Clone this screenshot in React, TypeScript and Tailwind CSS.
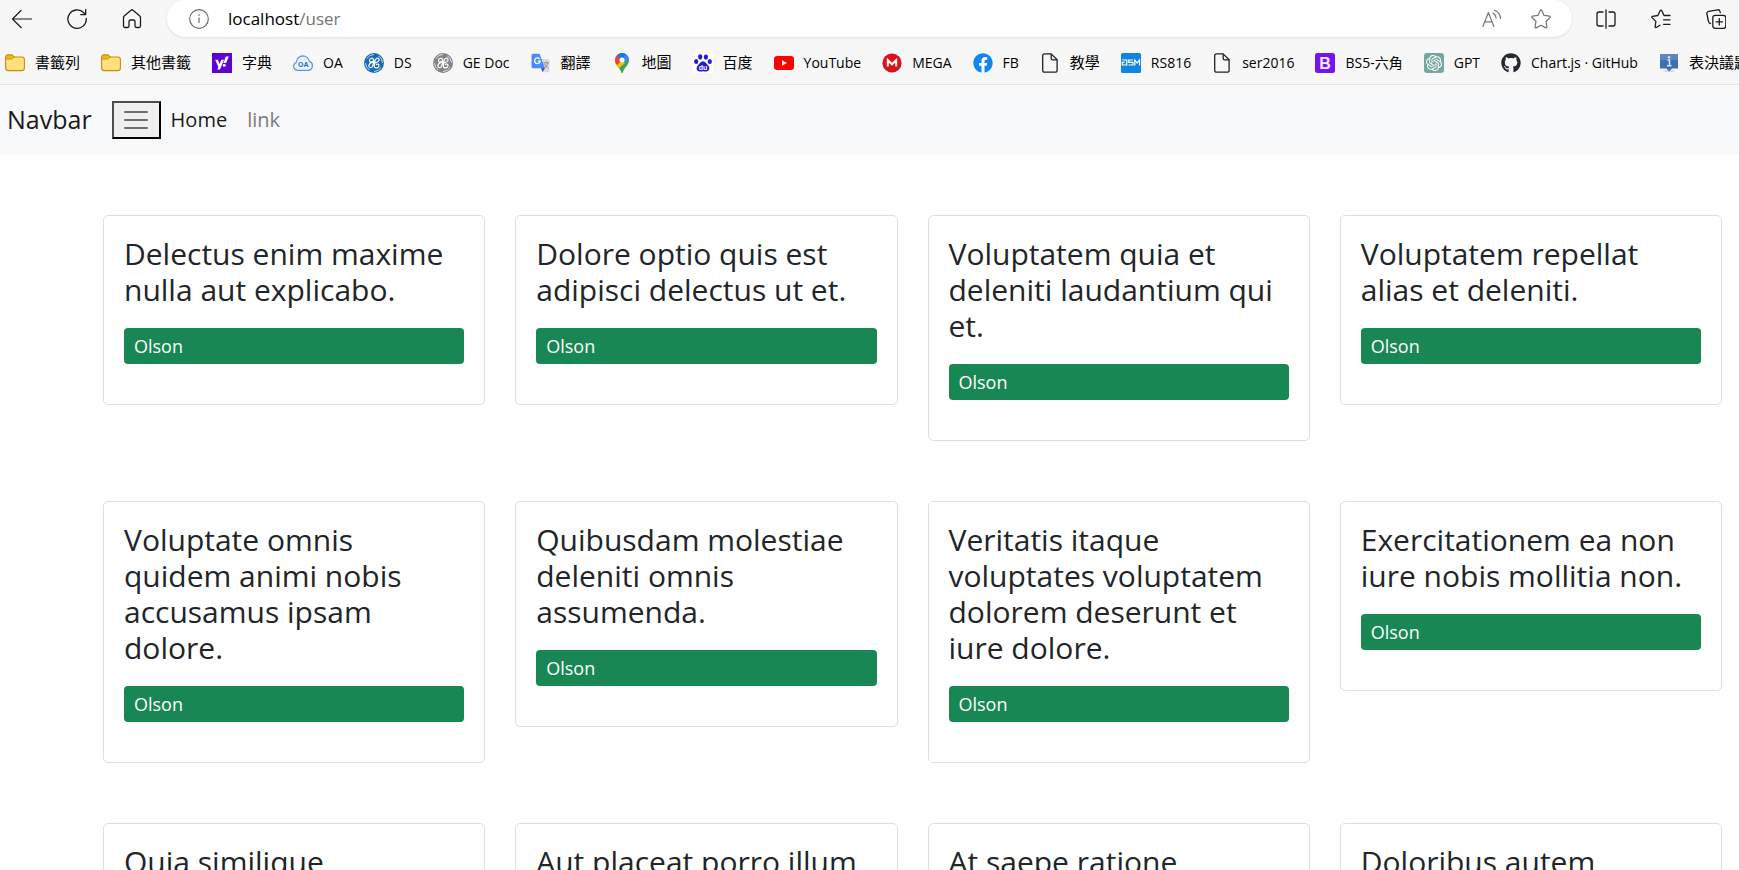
import type { ReactNode } from 'react';
import { FaGithub, FaFacebook } from 'react-icons/fa';
import { SiOpenai } from 'react-icons/si';

const FolderIcon = () => (
  <svg viewBox="0 0 20 20" className="size-5">
    <path d="M.6 4.500A2.500 2.500 0 0 1 3 2H7l2.300 2H17a2.400 2.400 0 0 1 2.400 2.400V15a2.600 2.600 0 0 1-2.600 2.600H3.200A2.600 2.600 0 0 1 .6 15z" fill="#ffdf7e" stroke="#c08e10" strokeWidth="1.100" />
    <path d="M.7 5.500V4.200A2.200 2.200 0 0 1 3 2h4l2.200 2-1.600 1.500A2 2 0 0 1 6.200 6H1.200z" fill="#f4b90c" stroke="#c08e10" strokeWidth=".9" />
  </svg>
);

const YahooIcon = () => (
  <svg viewBox="0 0 20 20" className="size-5">
    <rect width="20" height="20" fill="#5f01d1" />
    <path d="M3.200 6.800h2.700l1.700 4.100 1.700-4.100H12L8 16.600H5.300l1.100-2.500zM13.800 3.400h3L14.200 10h-2.800z" fill="#fff" />
    <circle cx="12.200" cy="12.300" r="1.500" fill="#fff" />
  </svg>
);

const OaIcon = () => (
  <svg viewBox="0 0 20 20" className="size-5">
    <path d="M4.500 17.300A4.200 4.200 0 0 1 3.400 9.200 6.600 6.600 0 0 1 9.800 2.800a6.600 6.600 0 0 1 6.500 5.600 4.600 4.600 0 0 1-.8 8.900z" fill="#edf4ff" stroke="#5a92ec" strokeWidth="1.200" />
    <text x="10.300" y="14.300" textAnchor="middle" fontFamily="Liberation Sans, sans-serif" fontWeight="700" fontSize="7" fill="#1f63dc">OA</text>
  </svg>
);

const GeIcon = ({ color }: { color: string }) => (
  <svg viewBox="0 0 20 20" className="size-5" fill="none" stroke="#fff">
    <circle cx="10" cy="10" r="10" fill={color} stroke="none" />
    <g strokeWidth=".9" strokeLinecap="round" opacity=".85">
      <path d="M3 5.200Q5.300 1.700 9.500 1.500M14.800 3Q18.300 5.300 18.500 9.500M17 14.800Q14.700 18.300 10.500 18.500M5.200 17Q1.700 14.700 1.500 10.500" />
    </g>
    <path strokeWidth="1.200" strokeLinecap="round" d="M9.400 6.600C8.800 4.600 6 4.800 5.500 7c-.4 2 1.600 2.500 2.800 1.400M9.800 8.300C8 9.300 5.200 10 4.900 12.400c-.3 2.300 2 3 3.300 1.400C9.300 12.400 9.500 10.500 9.800 6.600M10.500 14c1.500 1.800 4.300.8 4.500-1.300.1-1.500-1.500-2.200-2.600-1.200M10.400 13c0-3 .7-7 2.500-7.700 1.700-.6 2.700 1.200 1.900 2.500-.8 1.300-2.500 1.700-4 2.200" />
  </svg>
);

const TranslateIcon = () => (
  <svg viewBox="0 0 20 20" className="size-5">
    <path d="M8 6h9A1.500 1.500 0 0 1 18.500 7.500V18a1.300 1.300 0 0 1-1.300 1.300H12z" fill="#dcdcdc" />
    <path d="M10 15h4.200L11.500 19z" fill="#2f56bd" />
    <path d="M2 .8h6.500L14 15.300H2A1.500 1.500 0 0 1 .5 13.800V2.300A1.500 1.500 0 0 1 2 .8z" fill="#4c8bf5" />
    <path d="M8.600 6A2.800 2.800 0 1 0 9.200 8.200H6.700" fill="none" stroke="#fff" strokeWidth="1.300" />
    <path d="M12.500 9.800H18M15.200 8.500v1.300M17 9.800c-.5 2.500-2 4-3.500 5M13.500 10.800c.7 2 2.200 3.500 4 4.500" fill="none" stroke="#76848f" strokeWidth=".9" />
  </svg>
);

const MapsIcon = () => (
  <svg viewBox="0 0 20 20" className="size-5">
    <defs>
      <clipPath id="pin">
        <path d="M10 0a7 7 0 0 1 7 7c0 3-1.500 4.800-3.200 7-1.400 1.800-2.300 3-2.800 5-.3 1.200-1.700 1.200-2 0-.5-2-1.400-3.200-2.800-5C4.500 11.800 3 10 3 7a7 7 0 0 1 7-7z" />
      </clipPath>
    </defs>
    <g clipPath="url(#pin)">
      <path d="M0 0h20v20H0z" fill="#34a853" />
      <path d="M10 7 3.500 14.500 0 12 5 4l10-2z" fill="#fbbc04" />
      <path d="M10 7 4.700 13 0 10 4.600 2.500z" fill="#fbbc04" />
      <path d="M4.600 2.500 10 7l-5 5L0 9z" fill="#ea4335" />
      <path d="M10 7 4 14l2 2 7-6z" fill="#fbbc04" />
      <path d="M4.600 2.500 10 7l5-5.500L10-1z" fill="#1a73e8" />
      <path d="m10 7 4-6 5 3-5 5z" fill="#4285f4" />
    </g>
    <circle cx="10" cy="7" r="2.500" fill="#fff" />
  </svg>
);

const BaiduIcon = () => (
  <svg viewBox="0 0 20 20" className="size-5">
    <rect width="20" height="20" fill="#fff" />
    <g fill="#2319dc">
      <ellipse cx="7.200" cy="4" rx="2.100" ry="2.700" />
      <ellipse cx="12.900" cy="4.100" rx="2.100" ry="2.700" />
      <ellipse cx="3.200" cy="8.400" rx="2.100" ry="2.500" />
      <ellipse cx="16.800" cy="8.600" rx="2.100" ry="2.500" />
      <path d="M10 8.300c2.200 0 3 2.300 4.800 3.800 2.500 2.200 2 6.500-1.600 6.500-1.200 0-2-.4-3.200-.4s-2 .4-3.200.4c-3.600 0-4.100-4.300-1.600-6.500C7 10.600 7.800 8.300 10 8.300z" />
    </g>
    <text x="10" y="17" textAnchor="middle" fontFamily="Liberation Sans, sans-serif" fontWeight="700" fontSize="7" fill="#fff">du</text>
  </svg>
);

const YouTubeIcon = () => (
  <svg viewBox="0 0 20 20" className="size-5">
    <rect y="3" width="20" height="14" rx="3.200" fill="#f00" />
    <path d="M8 7.200v5.600l5-2.800z" fill="#fff" />
  </svg>
);

const MegaIcon = () => (
  <svg viewBox="0 0 20 20" className="size-5">
    <circle cx="10" cy="10" r="9.600" fill="#dd1219" />
    <path d="M5.800 13.600V7.200L10 11.300l4.200-4.100v6.400" fill="none" stroke="#fff" strokeWidth="2" />
  </svg>
);

const FacebookIcon = () => (
  <span className="block size-5 rounded-full bg-white">
    <FaFacebook className="size-5 text-[#0f86f2]" />
  </span>
);

const PageIcon = () => (
  <svg viewBox="0 0 20 20" className="size-5" fill="none" stroke="#222" strokeWidth="1.300" strokeLinejoin="round">
    <path d="M4.500.9h6.700l5.900 5.900v10.600a1.800 1.800 0 0 1-1.800 1.800H4.500a1.800 1.800 0 0 1-1.800-1.800V2.700A1.800 1.800 0 0 1 4.500.9z" />
    <path d="M11.200.9v4.500a1.400 1.400 0 0 0 1.400 1.400h4.500" />
  </svg>
);

const DsmIcon = () => (
  <svg viewBox="0 0 20 20" className="size-5">
    <rect width="20" height="20" rx="1.500" fill="#0f84e0" />
    <path d="M1.200 7h4.600v5H1.300V9.400h2.200M12 7H7.700v2.400H12V12H7.500M13.800 12.500V7l2.300 3L18.500 7v5.500" fill="none" stroke="#fff" strokeWidth="1.200" />
  </svg>
);

const BootstrapIcon = () => (
  <svg viewBox="0 0 20 20" className="size-5">
    <rect width="20" height="20" rx="2.500" fill="#7414ee" />
    <text x="10" y="15.600" textAnchor="middle" fontFamily="Liberation Sans, sans-serif" fontWeight="700" fontSize="16" fill="#f4e9ff">B</text>
  </svg>
);

const GptIcon = () => (
  <span className="flex size-5 items-center justify-center rounded-[3px] bg-[#75a99c]">
    <SiOpenai className="size-4 text-white" />
  </span>
);

const VoteIcon = () => (
  <svg viewBox="0 0 20 20" className="size-5">
    <ellipse cx="10" cy="18" rx="6" ry="1" fill="#d5d8dc" />
    <path d="M1 1h18v14.500h-6L10 18.500l-2.500-3H1z" fill="#3f6fb5" />
    <path d="M1 1h18v6H1z" fill="#5d86c0" />
    <path d="M8.500 7h2v5.500M8 12.800h4.500" stroke="#dbe8f8" strokeWidth="1.500" fill="none" />
    <circle cx="10" cy="4.200" r="1.200" fill="#dbe8f8" />
  </svg>
);

const bookmarks: { label: string; icon: ReactNode; chinese?: boolean }[] = [
  { label: '書籤列', icon: <FolderIcon />, chinese: true },
  { label: '其他書籤', icon: <FolderIcon />, chinese: true },
  { label: '字典', icon: <YahooIcon />, chinese: true },
  { label: 'OA', icon: <OaIcon /> },
  { label: 'DS', icon: <GeIcon color="#1769bd" /> },
  { label: 'GE Doc', icon: <GeIcon color="#828386" /> },
  { label: '翻譯', icon: <TranslateIcon />, chinese: true },
  { label: '地圖', icon: <MapsIcon />, chinese: true },
  { label: '百度', icon: <BaiduIcon />, chinese: true },
  { label: 'YouTube', icon: <YouTubeIcon /> },
  { label: 'MEGA', icon: <MegaIcon /> },
  { label: 'FB', icon: <FacebookIcon /> },
  { label: '教學', icon: <PageIcon />, chinese: true },
  { label: 'RS816', icon: <DsmIcon /> },
  { label: 'ser2016', icon: <PageIcon /> },
  { label: 'BS5-六角', icon: <BootstrapIcon /> },
  { label: 'GPT', icon: <GptIcon /> },
  { label: 'Chart.js · GitHub', icon: <FaGithub className="size-5 text-[#24292f]" /> },
  { label: '表決議題', icon: <VoteIcon />, chinese: true },
];

const posts = [
  'Delectus enim maxime nulla aut explicabo.',
  'Dolore optio quis est adipisci delectus ut et.',
  'Voluptatem quia et deleniti laudantium qui et.',
  'Voluptatem repellat alias et deleniti.',
  'Voluptate omnis quidem animi nobis accusamus ipsam dolore.',
  'Quibusdam molestiae deleniti omnis assumenda.',
  'Veritatis itaque voluptates voluptatem dolorem deserunt et iure dolore.',
  'Exercitationem ea non iure nobis mollitia non.',
  'Quia similique',
  'Aut placeat porro illum',
  'At saepe ratione',
  'Doloribus autem',
];

const STAR = 'M9.300 1.300a.8.8 0 0 1 1.400 0l2.400 5.100 5.500.8a.8.8 0 0 1 .4 1.300l-4 4 1 5.600a.8.8 0 0 1-1.100.8L10 16.200l-4.900 2.700a.8.8 0 0 1-1.100-.8l1-5.600-4-4a.8.8 0 0 1 .4-1.300l5.500-.8z';

function Toolbar() {
  return (
    <div className="flex h-[37px] items-center">
      <div className="flex w-[167px] shrink-0 items-center gap-[35px] pl-3">
        <button aria-label="Back" className="size-5">
          <svg viewBox="0 0 20 20" fill="none" stroke="#1b1b1b" strokeWidth="1.200" strokeLinecap="round" strokeLinejoin="round">
            <path d="M19.500 10H.7M9 1.500.5 10 9 18.500" />
          </svg>
        </button>
        <button aria-label="Refresh" className="size-5">
          <svg viewBox="0 0 20 20" fill="none" stroke="#1b1b1b" strokeWidth="1.300" strokeLinecap="round" strokeLinejoin="round">
            <path d="M19.300 9.500A9.200 9.200 0 1 1 16.800 3.800L18.500 5.500M18.700.7v4.900h-5" />
          </svg>
        </button>
        <button aria-label="Home page" className="size-5">
          <svg viewBox="0 0 20 20" fill="none" stroke="#1b1b1b" strokeWidth="1.300" strokeLinejoin="round">
            <path d="M1.500 8.500a2 2 0 0 1 .7-1.500L9 1.200a1.500 1.500 0 0 1 2 0L17.800 7a2 2 0 0 1 .7 1.500V17a1.500 1.500 0 0 1-1.500 1.500h-2.500A1.500 1.500 0 0 1 13 17v-4.500a1.500 1.500 0 0 0-1.500-1.500h-3A1.500 1.500 0 0 0 7 12.500V17a1.500 1.500 0 0 1-1.500 1.500H3A1.500 1.500 0 0 1 1.500 17z" />
          </svg>
        </button>
      </div>
      <div className="flex h-full grow items-center rounded-full bg-white pr-[21px] pl-[22px] shadow-[0_1px_3px_#0000001a]">
        <svg viewBox="0 0 20 20" className="size-5" fill="none" stroke="#6b6b6b" strokeWidth="1.200">
          <circle cx="10" cy="10" r="9.300" />
          <path d="M10 8.500v5.500" />
          <circle cx="10" cy="6" r=".5" fill="#6b6b6b" strokeWidth=".6" />
        </svg>
        <div className="ml-[19px] grow text-[17px] text-black">
          localhost<span className="text-[#757575]">/user</span>
        </div>
        <div className="flex gap-[29px]">
          <button aria-label="Read aloud" className="size-5">
            <svg viewBox="0 0 20 20" fill="none" stroke="#757575" strokeWidth="1.200" strokeLinecap="round" strokeLinejoin="round">
              <path d="M.9 17.500 6.400 3.500l5.500 14M2.700 12.800h7.400M11 4c1.700 1 2.900 2.700 3.100 5M12.500 1.200c3.500 1.500 5.800 4.300 6 8.300" />
            </svg>
          </button>
          <button aria-label="Add to favorites" className="size-5">
            <svg viewBox="0 0 20 20" fill="none" stroke="#757575" strokeWidth="1.200" strokeLinejoin="round">
              <path d={STAR} />
            </svg>
          </button>
        </div>
      </div>
      <div className="flex w-[167px] shrink-0 items-center gap-[35px] pl-6">
        <button aria-label="Split screen" className="size-5">
          <svg viewBox="0 0 20 20" fill="none" stroke="#1b1b1b" strokeWidth="1.300" strokeLinecap="round">
            <path d="M10 .8v18.400M7 3H3a2 2 0 0 0-2 2v10a2 2 0 0 0 2 2h4M13 3h4a2 2 0 0 1 2 2v10a2 2 0 0 1-2 2h-4" />
          </svg>
        </button>
        <button aria-label="Favorites" className="size-5">
          <svg viewBox="0 0 20 20" fill="none" stroke="#1b1b1b" strokeWidth="1.300" strokeLinecap="round" strokeLinejoin="round">
            <path d="M9 16.300 5.200 18.500a.8.8 0 0 1-1.100-.8l.8-5.300L1 8.600a.8.8 0 0 1 .4-1.300l5.400-.8 2.500-5a.8.8 0 0 1 1.400 0l2.300 5H19M12.500 10.800H19M12.500 15.300H19" />
          </svg>
        </button>
        <button aria-label="Collections" className="size-5">
          <svg viewBox="0 0 20 20" fill="none" stroke="#1b1b1b" strokeWidth="1.300" strokeLinecap="round" strokeLinejoin="round">
            <rect x="6.800" y="6.300" width="13" height="13" rx="2.500" />
            <path d="M13.300 9.600v6.400M10.100 12.800h6.400M4.500 14.500a2.500 2.500 0 0 1-2-2L.9 5a2.200 2.200 0 0 1 1.800-2.700L11.500.8a2.200 2.200 0 0 1 2.500 1.700l.3 1.200" />
          </svg>
        </button>
      </div>
    </div>
  );
}

export default function App() {
  return (
    <div className="h-screen overflow-hidden bg-white font-['Open_Sans','Noto_Sans_CJK_TC',sans-serif] text-[#212529]">
      <header className="border-b border-[#e5e5e5] bg-[#f7f7f7]">
        <Toolbar />
        <nav aria-label="Bookmarks" className="flex h-[47px] items-center gap-[21px] overflow-hidden pt-1 pl-[5px]">
          {bookmarks.map(({ label, icon, chinese }) => (
            <a key={label} href="#" className="flex shrink-0 items-center gap-[10px] whitespace-nowrap text-black">
              {icon}
              <span className={chinese ? 'text-[15px]' : 'text-sm'}>{label}</span>
            </a>
          ))}
        </nav>
      </header>

      <nav className="flex h-[70px] items-center bg-[#f8f9fa] pl-[7px]">
        <a href="#" className="mr-5 text-[25px] text-[#1a1a1a]">Navbar</a>
        <button aria-label="Toggle navigation" className="flex h-[38px] w-[49px] items-center justify-center border-2 border-t-[#4c4c4c] border-r-black border-b-black border-l-[#4c4c4c] bg-[#efefef]">
          <svg viewBox="0 0 30 30" className="size-[30px]" stroke="#6f6f6f" strokeWidth="2" strokeLinecap="round">
            <path d="M4 7h22M4 15h22M4 23h22" />
          </svg>
        </button>
        <a href="#" className="ml-[10px] text-xl text-[#1a1a1a]">Home</a>
        <a href="#" className="ml-5 text-xl text-[#7a7b7c]">link</a>
      </nav>

      <main className="grid grid-cols-4 items-start gap-x-[30px] gap-y-[60px] pt-[60px] pr-[17px] pl-[103px]">
        {posts.map((title) => (
          <article key={title} className="rounded-[5px] border border-[#dfdfdf] p-5">
            <h2 className="mb-5 text-3xl leading-9">{title}</h2>
            <p className="mb-5 rounded-[4px] bg-[#198754] px-[10px] text-lg leading-9 text-white">Olson</p>
          </article>
        ))}
      </main>
    </div>
  );
}
